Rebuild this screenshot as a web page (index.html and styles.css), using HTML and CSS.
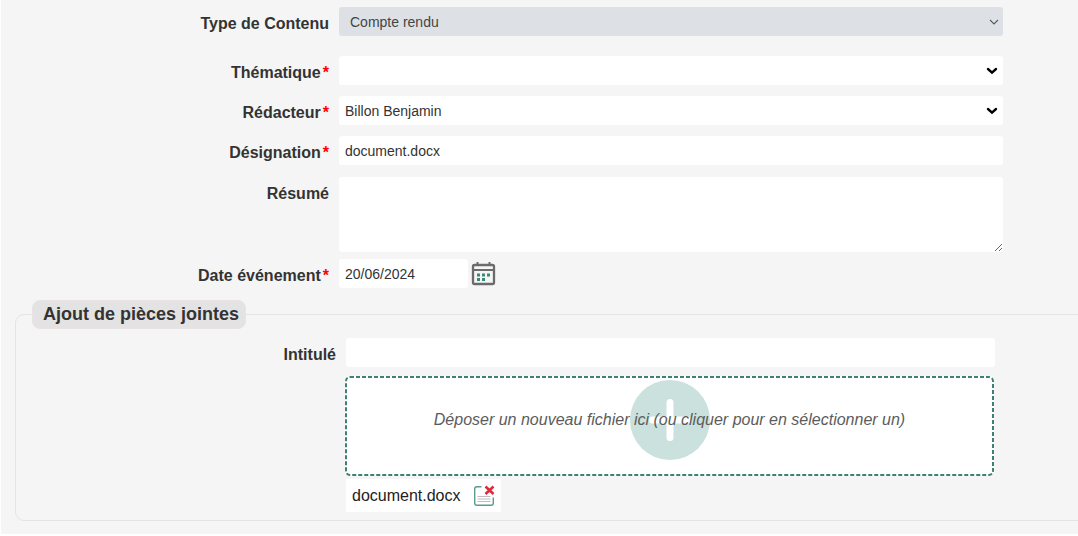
FILE: index.html
```html
<!DOCTYPE html>
<html lang="fr">
<head>
<meta charset="utf-8">
<title>Compte rendu</title>
<meta name="viewport" content="width=device-width, initial-scale=1">
<link rel="stylesheet" href="styles.css">
</head>
<body>
<form class="panel">
  <div class="fields">
    <div class="row row-type">
      <label class="label" for="type">Type de Contenu</label>
      <div class="select-wrap">
        <select class="control control-type" id="type"><option>Compte rendu</option></select>
        <svg class="arrow arrow-thin" viewBox="0 0 10 6" aria-hidden="true"><path d="M1 1l4 4 4-4" fill="none" stroke="#555b61" stroke-width="1.1"/></svg>
      </div>
    </div>
    <div class="row">
      <label class="label" for="theme">Thématique<span class="required">*</span></label>
      <div class="select-wrap">
        <select class="control" id="theme"><option></option></select>
        <svg class="arrow" viewBox="0 0 12 8" aria-hidden="true"><path d="M2 2l4 3.6L10 2" fill="none" stroke="#000" stroke-width="2.4" stroke-linecap="round"/></svg>
      </div>
    </div>
    <div class="row">
      <label class="label" for="author">Rédacteur<span class="required">*</span></label>
      <div class="select-wrap">
        <select class="control" id="author"><option>Billon Benjamin</option></select>
        <svg class="arrow" viewBox="0 0 12 8" aria-hidden="true"><path d="M2 2l4 3.6L10 2" fill="none" stroke="#000" stroke-width="2.4" stroke-linecap="round"/></svg>
      </div>
    </div>
    <div class="row">
      <label class="label" for="name">Désignation<span class="required">*</span></label>
      <input class="control" id="name" type="text" value="document.docx">
    </div>
    <div class="row row-summary">
      <label class="label" for="summary">Résumé</label>
      <textarea class="control summary" id="summary"></textarea>
    </div>
    <div class="row">
      <label class="label" for="date">Date événement<span class="required">*</span></label>
      <div class="date">
        <input class="control" id="date" type="text" value="20/06/2024">
        <button class="icon-button" type="button" aria-label="Choisir une date">
          <svg width="25" height="25" viewBox="0 0 25 25" aria-hidden="true">
            <rect x="2" y="4" width="21" height="19" rx="1.5" fill="none" stroke="#6b6b6b" stroke-width="2.3"/>
            <path d="M2 9H23M6.500 1V5M18.500 1V5" fill="none" stroke="#6b6b6b" stroke-width="2"/>
            <path d="M6 12.500h3v3H6zM11 12.500h3v3h-3zM16 12.500h3v3h-3zM6 17h3v3H6zM11 17h3v3h-3z" fill="#3b8877"/>
          </svg>
        </button>
      </div>
    </div>
  </div>

  <fieldset class="attachments">
    <legend class="legend">Ajout de pièces jointes</legend>
    <div class="attachment-grid">
      <label class="label" for="title">Intitulé</label>
      <input class="control" id="title" type="text">
      <div class="files">
        <button class="dropzone" type="button">
          <svg class="outline" aria-hidden="true"><rect class="outline-rect" x="1" y="1" rx="4" fill="none" stroke="#3b8272" stroke-width="2" stroke-dasharray="4 2"/></svg>
          <svg class="plus" width="80" height="80" viewBox="0 0 80 80" aria-hidden="true">
            <circle cx="40" cy="40" r="40" fill="#cae1dd"/>
            <path d="M40 22.500V57.500M22.500 40H57.500" stroke="#fff" stroke-width="7" stroke-linecap="round"/>
          </svg>
          <span class="hint">Déposer un nouveau fichier ici (ou cliquer pour en sélectionner un)</span>
        </button>
        <div class="file">
          <span>document.docx</span>
          <button class="icon-button" type="button" aria-label="Supprimer document.docx">
            <svg width="22" height="22" viewBox="0 0 22 22" aria-hidden="true">
              <path d="M8.500 1.700H4Q1.700 1.700 1.700 4V18Q1.700 20.300 4 20.300H18Q20.300 20.300 20.300 18V12.500" fill="none" stroke="#5b9b8d" stroke-width="1.400"/>
              <path d="M4.500 11.500H17.500M4.500 14H17.500M4.500 16.500H17.500" stroke="#bdbdbd" stroke-width="1"/>
              <path d="M12.500 1.500l8 7.500M20.500 1.500l-8 7.500" stroke="#dc2b3c" stroke-width="2.600"/>
            </svg>
          </button>
        </div>
      </div>
    </div>
  </fieldset>
</form>
</body>
</html>
```
FILE: styles.css
```css
* {
  box-sizing: border-box;
}

body {
  margin: 0;
  background: #fff;
  color: #333;
  font-family: "Liberation Sans", Arial, sans-serif;
  font-size: 16px;
  line-height: 20px;
}

.panel {
  margin-left: 1px;
  padding: 7px 0 13px;
  overflow: hidden;
  background: #f5f5f5;
}

.fields {
  display: flex;
  flex-direction: column;
  gap: 11px;
  padding-right: 75px;
}

.row {
  display: grid;
  grid-template-columns: 328px 1fr;
  column-gap: 10px;
}

.row-type {
  margin-bottom: 9px;
}

.row-summary {
  margin-top: 1px;
  margin-bottom: -4px;
}

.label {
  padding-top: 7px;
  font-weight: bold;
  text-align: right;
}

.required {
  margin-left: 2px;
  color: #f00;
}

.control {
  display: block;
  width: 100%;
  height: 29px;
  margin: 0;
  padding: 0 6px;
  border: 0;
  border-radius: 3px;
  background: #fff;
  color: #333;
  font: 14px "Liberation Sans", Arial, sans-serif;
  appearance: none;
}

.control-type {
  padding: 0 11px;
  background: #dde1e5;
  color: #444;
}

.summary {
  height: 75px;
  padding: 6px;
  resize: both;
}

.select-wrap {
  position: relative;
}

.arrow {
  position: absolute;
  top: 11px;
  right: 5px;
  width: 12px;
  height: 8px;
  pointer-events: none;
}

.arrow-thin {
  right: 4px;
  width: 10px;
}

.date {
  display: flex;
  align-items: center;
  gap: 3px;
}

.date .control {
  width: 129px;
}

.icon-button {
  display: flex;
  padding: 0;
  border: 0;
  background: none;
  cursor: pointer;
}

.attachments {
  min-width: 0;
  margin: 12px -10px 0 14px;
  padding: 9px 92px 8px 16px;
  border: 1px solid #e4e4e4;
  border-radius: 9px;
}

.legend {
  padding: 3px 6px 4px 10px;
  border: 1px solid #e9e3e3;
  border-radius: 8px;
  background: #e3e3e3;
  font-size: 18px;
  font-weight: bold;
  line-height: 20px;
}

.attachment-grid {
  display: grid;
  grid-template-columns: 304px 1fr;
  gap: 9px 10px;
}

.files {
  grid-column: 2;
  display: flex;
  flex-direction: column;
  align-items: flex-start;
  gap: 3px;
}

.dropzone {
  position: relative;
  display: grid;
  justify-items: center;
  align-items: start;
  align-self: stretch;
  height: 100px;
  margin: 0 1px 0 -1px;
  padding: 4px 2px;
  border: 0;
  border-radius: 5px;
  background: #fff;
  color: #5c5c5c;
  font: italic 16px/20px "Liberation Sans", Arial, sans-serif;
  cursor: pointer;
}

.outline {
  position: absolute;
  inset: 0;
  width: 100%;
  height: 100%;
}

.outline-rect {
  width: calc(100% - 2px);
  height: calc(100% - 2px);
}

.plus,
.hint {
  grid-area: 1 / 1;
}

.hint {
  z-index: 1;
  padding-top: 30px;
}

.file {
  display: flex;
  align-items: center;
  gap: 12px;
  height: 33px;
  padding: 0 6px;
  background: #fff;
  color: #222;
}
```
